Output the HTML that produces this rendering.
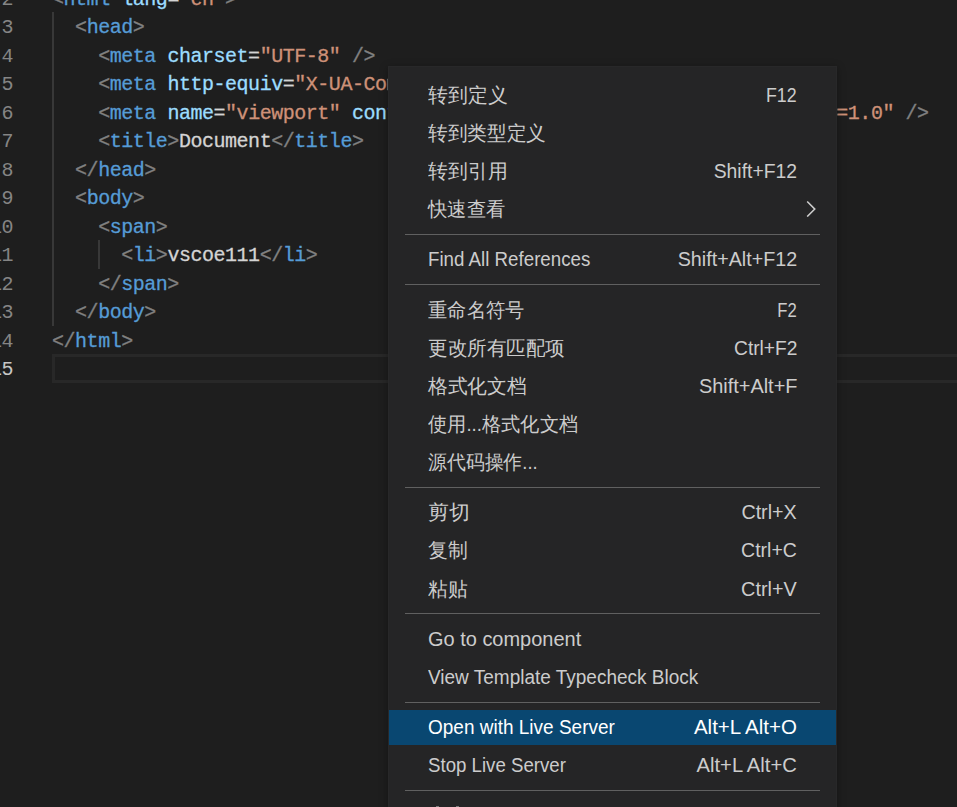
<!DOCTYPE html>
<html><head><meta charset="utf-8"><style>
html,body{margin:0;padding:0;}
body{width:957px;height:807px;overflow:hidden;background:#1e1e1e;position:relative;}
.ln{position:absolute;left:-47px;width:60px;text-align:right;height:28.5px;line-height:28.5px;font-family:"Liberation Mono",monospace;font-size:20px;letter-spacing:-0.47px;color:#858585;white-space:pre;}
.ln.act{color:#c6c6c6;}
.cl{position:absolute;-webkit-text-stroke:0.3px currentColor;left:52px;height:28.5px;line-height:28.5px;font-family:"Liberation Mono",monospace;font-size:20px;letter-spacing:-0.47px;white-space:pre;}
.curline{position:absolute;left:52px;top:354px;width:920px;height:23px;border:3px solid #282828;}
.guide{position:absolute;width:2px;background:#383838;}
.menu{position:absolute;left:388px;top:66px;width:449px;height:800px;background:#252526;box-shadow:0 2px 8px rgba(0,0,0,0.36), inset 0 0 0 1px #282829;font-family:"Liberation Sans",sans-serif;font-size:19.5px;color:#cccccc;}
.sep{position:absolute;left:17px;width:415px;height:1px;background:#606060;}
.hl{position:absolute;left:1px;width:447px;height:35px;background:#094771;}
.it{position:absolute;left:40px;height:38px;line-height:38px;white-space:pre;}
.it .lb{display:inline-block;transform-origin:0 50%;}
.kb{left:auto;right:40px;text-align:right;}
.kb .kbs{display:inline-block;transform-origin:100% 50%;}
.hlt{color:#ffffff;}
.arr{position:absolute;left:418px;}
</style></head><body>
<div class="curline"></div>
<div class="guide" style="left:52px;top:12px;height:313.5px"></div>
<div class="guide" style="left:98px;top:240px;height:28.5px"></div>
<div class="ln" style="top:-14.50px">2</div><div class="cl" style="top:-14.50px"><span style="color:#808080">&lt;</span><span style="color:#569cd6">html</span><span style="color:#d4d4d4"> </span><span style="color:#9cdcfe">lang</span><span style="color:#d4d4d4">=</span><span style="color:#ce9178">"en"</span><span style="color:#808080">&gt;</span></div><div class="ln" style="top:14.00px">3</div><div class="cl" style="top:14.00px"><span style="color:#d4d4d4">  </span><span style="color:#808080">&lt;</span><span style="color:#569cd6">head</span><span style="color:#808080">&gt;</span></div><div class="ln" style="top:42.50px">4</div><div class="cl" style="top:42.50px"><span style="color:#d4d4d4">    </span><span style="color:#808080">&lt;</span><span style="color:#569cd6">meta</span><span style="color:#d4d4d4"> </span><span style="color:#9cdcfe">charset</span><span style="color:#d4d4d4">=</span><span style="color:#ce9178">"UTF-8"</span><span style="color:#808080"> /&gt;</span></div><div class="ln" style="top:71.00px">5</div><div class="cl" style="top:71.00px"><span style="color:#d4d4d4">    </span><span style="color:#808080">&lt;</span><span style="color:#569cd6">meta</span><span style="color:#d4d4d4"> </span><span style="color:#9cdcfe">http-equiv</span><span style="color:#d4d4d4">=</span><span style="color:#ce9178">"X-UA-Compatible"</span><span style="color:#d4d4d4"> </span><span style="color:#9cdcfe">content</span><span style="color:#d4d4d4">=</span><span style="color:#ce9178">"IE=edge"</span><span style="color:#808080"> /&gt;</span></div><div class="ln" style="top:99.50px">6</div><div class="cl" style="top:99.50px"><span style="color:#d4d4d4">    </span><span style="color:#808080">&lt;</span><span style="color:#569cd6">meta</span><span style="color:#d4d4d4"> </span><span style="color:#9cdcfe">name</span><span style="color:#d4d4d4">=</span><span style="color:#ce9178">"viewport"</span><span style="color:#d4d4d4"> </span><span style="color:#9cdcfe">content</span><span style="color:#d4d4d4">=</span><span style="color:#ce9178">"width=device-width, initial-scale=1.0"</span><span style="color:#808080"> /&gt;</span></div><div class="ln" style="top:128.00px">7</div><div class="cl" style="top:128.00px"><span style="color:#d4d4d4">    </span><span style="color:#808080">&lt;</span><span style="color:#569cd6">title</span><span style="color:#808080">&gt;</span><span style="color:#d4d4d4">Document</span><span style="color:#808080">&lt;/</span><span style="color:#569cd6">title</span><span style="color:#808080">&gt;</span></div><div class="ln" style="top:156.50px">8</div><div class="cl" style="top:156.50px"><span style="color:#d4d4d4">  </span><span style="color:#808080">&lt;/</span><span style="color:#569cd6">head</span><span style="color:#808080">&gt;</span></div><div class="ln" style="top:185.00px">9</div><div class="cl" style="top:185.00px"><span style="color:#d4d4d4">  </span><span style="color:#808080">&lt;</span><span style="color:#569cd6">body</span><span style="color:#808080">&gt;</span></div><div class="ln" style="top:213.50px">10</div><div class="cl" style="top:213.50px"><span style="color:#d4d4d4">    </span><span style="color:#808080">&lt;</span><span style="color:#569cd6">span</span><span style="color:#808080">&gt;</span></div><div class="ln" style="top:242.00px">11</div><div class="cl" style="top:242.00px"><span style="color:#d4d4d4">      </span><span style="color:#808080">&lt;</span><span style="color:#569cd6">li</span><span style="color:#808080">&gt;</span><span style="color:#d4d4d4">vscoe111</span><span style="color:#808080">&lt;/</span><span style="color:#569cd6">li</span><span style="color:#808080">&gt;</span></div><div class="ln" style="top:270.50px">12</div><div class="cl" style="top:270.50px"><span style="color:#d4d4d4">    </span><span style="color:#808080">&lt;/</span><span style="color:#569cd6">span</span><span style="color:#808080">&gt;</span></div><div class="ln" style="top:299.00px">13</div><div class="cl" style="top:299.00px"><span style="color:#d4d4d4">  </span><span style="color:#808080">&lt;/</span><span style="color:#569cd6">body</span><span style="color:#808080">&gt;</span></div><div class="ln" style="top:327.50px">14</div><div class="cl" style="top:327.50px"><span style="color:#808080">&lt;/</span><span style="color:#569cd6">html</span><span style="color:#808080">&gt;</span></div><div class="ln act" style="top:356.00px">15</div><div class="cl" style="top:356.00px"></div>
<div class="menu">
<div class="it" style="top:9.50px"><span class="lb" style="transform:scaleX(0.994)">转到定义</span></div><div class="it kb" style="top:9.50px"><span class="kbs" style="transform:scaleX(0.913)">F12</span></div><div class="it" style="top:47.50px"><span class="lb" style="transform:scaleX(0.983)">转到类型定义</span></div><div class="it" style="top:85.50px"><span class="lb" style="transform:scaleX(0.992)">转到引用</span></div><div class="it kb" style="top:85.50px"><span class="kbs" style="transform:scaleX(0.992)">Shift+F12</span></div><div class="it" style="top:123.50px"><span class="lb" style="transform:scaleX(0.967)">快速查看</span></div><svg class="arr" style="top:135px" width="10" height="16" viewBox="0 0 10 16"><path d="M1.2 0.5 L8.8 8.1 L1.2 15.6" fill="none" stroke="#cccccc" stroke-width="1.5"/></svg><div class="sep" style="top:168px"></div><div class="it" style="top:173.50px"><span class="lb" style="transform:scaleX(0.96)">Find All References</span></div><div class="it kb" style="top:173.50px"><span class="kbs" style="transform:scaleX(1.011)">Shift+Alt+F12</span></div><div class="sep" style="top:218px"></div><div class="it" style="top:224.50px"><span class="lb" style="transform:scaleX(0.963)">重命名符号</span></div><div class="it kb" style="top:224.50px"><span class="kbs" style="transform:scaleX(0.855)">F2</span></div><div class="it" style="top:262.50px"><span class="lb" style="transform:scaleX(0.975)">更改所有匹配项</span></div><div class="it kb" style="top:262.50px"><span class="kbs" style="transform:scaleX(0.984)">Ctrl+F2</span></div><div class="it" style="top:300.50px"><span class="lb" style="transform:scaleX(0.985)">格式化文档</span></div><div class="it kb" style="top:300.50px"><span class="kbs" style="transform:scaleX(1.022)">Shift+Alt+F</span></div><div class="it" style="top:338.50px"><span class="lb" style="transform:scaleX(0.96)">使用...格式化文档</span></div><div class="it" style="top:376.50px"><span class="lb" style="transform:scaleX(0.943)">源代码操作...</span></div><div class="sep" style="top:421px"></div><div class="it" style="top:426.50px"><span class="lb" style="transform:scaleX(1.046)">剪切</span></div><div class="it kb" style="top:426.50px"><span class="kbs" style="transform:scaleX(1.011)">Ctrl+X</span></div><div class="it" style="top:464.50px"><span class="lb" style="transform:scaleX(0.992)">复制</span></div><div class="it kb" style="top:464.50px"><span class="kbs" style="transform:scaleX(0.998)">Ctrl+C</span></div><div class="it" style="top:503.50px"><span class="lb" style="transform:scaleX(0.985)">粘贴</span></div><div class="it kb" style="top:503.50px"><span class="kbs" style="transform:scaleX(1.017)">Ctrl+V</span></div><div class="sep" style="top:547px"></div><div class="it" style="top:553.50px"><span class="lb" style="transform:scaleX(1.024)">Go to component</span></div><div class="it" style="top:591.50px"><span class="lb" style="transform:scaleX(0.974)">View Template Typecheck Block</span></div><div class="sep" style="top:636px"></div><div class="hl" style="top:644px"></div><div class="it hlt" style="top:641.50px"><span class="lb" style="transform:scaleX(0.974)">Open with Live Server</span></div><div class="it hlt kb" style="top:641.50px"><span class="kbs" style="transform:scaleX(1.052)">Alt+L Alt+O</span></div><div class="it" style="top:679.50px"><span class="lb" style="transform:scaleX(0.957)">Stop Live Server</span></div><div class="it kb" style="top:679.50px"><span class="kbs" style="transform:scaleX(1.036)">Alt+L Alt+C</span></div><div class="sep" style="top:724px"></div>
<div style="position:absolute;left:48px;top:740px;width:3px;height:1px;background:#7a7a7a"></div><div style="position:absolute;left:68px;top:740px;width:3px;height:1px;background:#7a7a7a"></div>
</div>
</body></html>
